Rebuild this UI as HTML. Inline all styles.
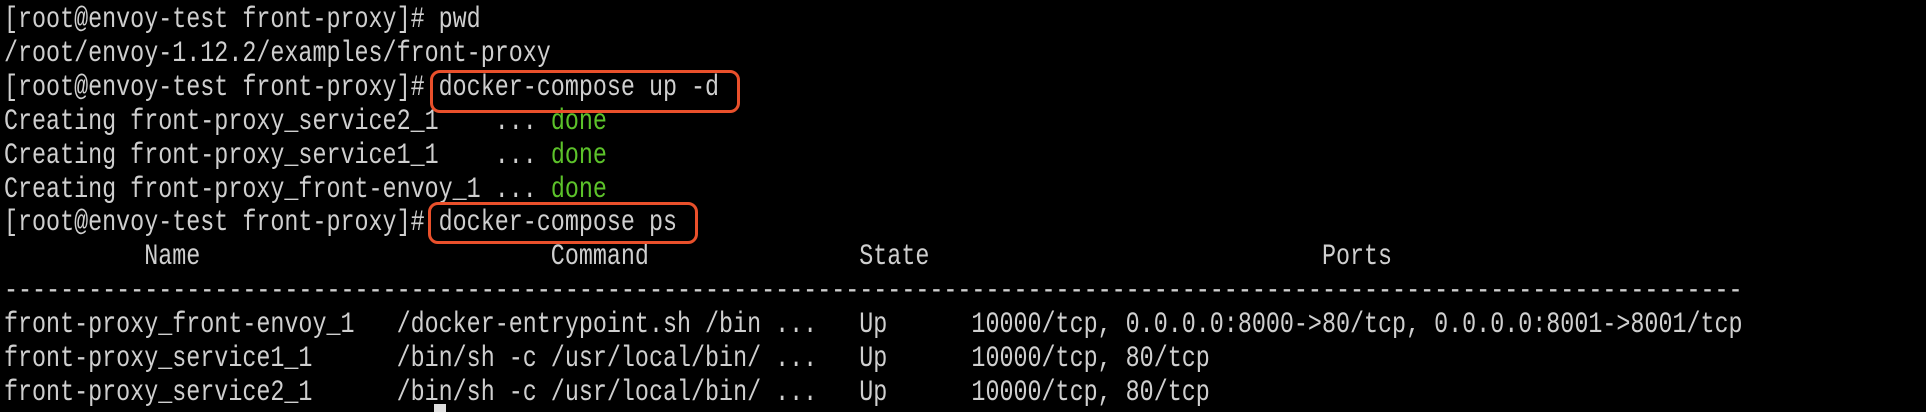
<!DOCTYPE html>
<html><head><style>
html,body{margin:0;padding:0;background:#000;width:1926px;height:412px;overflow:hidden}
pre{position:absolute;left:4px;top:3px;margin:0;font-family:"Liberation Mono",monospace;font-size:29.5px;line-height:33.9px;color:#cfcfcf;transform:scaleX(0.792);transform-origin:0 0;white-space:pre}
.g{color:#5cc22a}
.box{position:absolute;border:3.5px solid #e9502b;border-radius:10px;box-sizing:border-box}
.cur{position:absolute;left:434px;top:404px;width:12px;height:8px;background:#ddd}
</style></head><body>
<pre>[root@envoy-test front-proxy]# pwd
/root/envoy-1.12.2/examples/front-proxy
[root@envoy-test front-proxy]# docker-compose up -d
Creating front-proxy_service2_1    ... <span class="g">done</span>
Creating front-proxy_service1_1    ... <span class="g">done</span>
Creating front-proxy_front-envoy_1 ... <span class="g">done</span>
[root@envoy-test front-proxy]# docker-compose ps
          Name                         Command               State                            Ports
----------------------------------------------------------------------------------------------------------------------------
front-proxy_front-envoy_1   /docker-entrypoint.sh /bin ...   Up      10000/tcp, 0.0.0.0:8000->80/tcp, 0.0.0.0:8001->8001/tcp
front-proxy_service1_1      /bin/sh -c /usr/local/bin/ ...   Up      10000/tcp, 80/tcp
front-proxy_service2_1      /bin/sh -c /usr/local/bin/ ...   Up      10000/tcp, 80/tcp</pre>
<div class="box" style="left:430px;top:70px;width:310px;height:43px"></div>
<div class="box" style="left:428px;top:202px;width:270px;height:42px"></div>
<div class="cur"></div>
</body></html>
